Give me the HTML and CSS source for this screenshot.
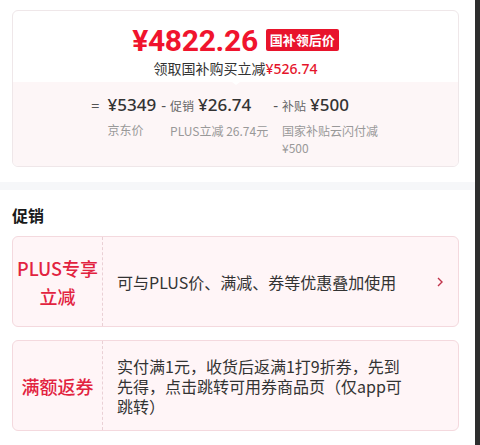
FILE: index.html
```html
<!DOCTYPE html>
<html lang="zh-CN">
<head>
  <meta charset="UTF-8" />
  <meta name="viewport" content="width=device-width, initial-scale=1.0"/>
  <title>促销</title>
  <link rel="stylesheet" href="styles.css">
</head>
<body>
  <div class="page">
    <div class="price-card">
      <div class="price-top">
        <div class="price-main">
          <span class="price-num">¥4822.26</span>
          <span class="price-badge">国补领后价</span>
        </div>
        <div class="price-sub">领取国补购买立减<span class="sub-red">¥526.74</span></div>
      </div>
      <div class="price-detail">
        <div class="calc-col">
          <span class="op op-eq">=</span>
          <div class="calc-body">
            <div class="calc-value">¥5349</div>
            <div class="calc-desc">京东价</div>
          </div>
        </div>
        <div class="calc-col">
          <span class="op">-</span>
          <div class="calc-body">
            <div class="calc-value"><span class="calc-tag">促销</span>¥26.74</div>
            <div class="calc-desc">PLUS立减 26.74元</div>
          </div>
        </div>
        <div class="calc-col">
          <span class="op">-</span>
          <div class="calc-body narrow">
            <div class="calc-value"><span class="calc-tag">补贴</span>¥500</div>
            <div class="calc-desc">国家补贴云闪付减¥500</div>
          </div>
        </div>
      </div>
    </div>

    <div class="divider"></div>

    <div class="promo">
      <h3 class="promo-title">促销</h3>

      <div class="promo-item">
        <div class="promo-label">PLUS专享<br>立减</div>
        <div class="promo-text">可与PLUS价、满减、券等优惠叠加使用</div>
        <span class="promo-arrow">
          <svg width="8" height="12" viewBox="0 0 8 12"><path d="M2 2l4 4-4 4" fill="none" stroke="#c0334a" stroke-width="1.4"/></svg>
        </span>
      </div>

      <div class="promo-item">
        <div class="promo-label">满额返券</div>
        <div class="promo-text">实付满1元，收货后返满1打9折券，先到先得，点击跳转可用券商品页（仅app可跳转）</div>
      </div>
    </div>
  </div>
  <div class="scrollbar"></div>
</body>
</html>
```

FILE: styles.css
```css
html, body {
  height: 100%;
}
body {
  margin: 0;
  display: flex;
  overflow: hidden;
  background: #fff;
  color: #333;
  font-family: "Noto Sans", "Noto Sans CJK SC", sans-serif;
}
.page {
  flex: 1;
}
.scrollbar {
  width: 5px;
  background: #2e2e2e;
}
.price-card {
  margin: 10px 16px 0 12px;
  border: 1px solid #efe7e9;
  border-radius: 6px;
  overflow: hidden;
}
.price-top {
  padding: 11px 0 3px;
  text-align: center;
}
.price-main {
  display: flex;
  justify-content: center;
  align-items: center;
  gap: 8px;
  height: 36px;
}
.price-num {
  font-family: Roboto, "Noto Sans", sans-serif;
  font-size: 30px;
  font-weight: 700;
  color: #f0142d;
  letter-spacing: -0.3px;
}
.price-badge {
  background: #e8142c;
  color: #fff;
  font-family: "Noto Sans CJK SC", sans-serif;
  font-size: 13px;
  font-weight: 700;
  line-height: 22px;
  padding: 0 4px;
  border-radius: 2px;
}
.price-sub {
  font-family: "Noto Sans CJK SC", sans-serif;
  font-size: 14px;
  line-height: 20px;
  color: #333;
}
.sub-red {
  font-family: "Noto Sans", sans-serif;
  font-weight: 500;
  color: #e5142b;
}
.price-detail {
  position: relative;
  background: #fdf6f7;
  padding: 11px 0 10px;
  display: flex;
  justify-content: center;
  gap: 5px;
}
.price-detail::before {
  content: "";
  position: absolute;
  top: 0;
  left: 50%;
  margin-left: -4px;
  border-left: 4px solid transparent;
  border-right: 4px solid transparent;
  border-top: 3px solid #fff;
}
.calc-col {
  display: flex;
  align-items: flex-start;
}
.op {
  font-size: 15px;
  line-height: 24px;
  color: #555;
  margin-right: 4px;
}
.op-eq {
  margin-right: 8px;
}
.calc-value {
  font-size: 17px;
  font-weight: 500;
  line-height: 24px;
  color: #333;
  white-space: nowrap;
}
.calc-tag {
  font-family: "Noto Sans CJK SC", sans-serif;
  font-size: 12px;
  font-weight: 400;
  color: #666;
  margin-right: 4px;
}
.calc-desc {
  margin-top: 4px;
  font-family: "Noto Sans CJK SC", sans-serif;
  font-size: 12px;
  line-height: 17px;
  color: #999;
}
.narrow {
  width: 98px;
}
.divider {
  height: 8px;
  margin-top: 15px;
  background: #f6f7f9;
}
.promo {
  padding: 0 16px 0 12px;
}
.promo-title {
  margin: 14px 0 10px;
  font-family: "Noto Sans CJK SC", sans-serif;
  font-size: 16px;
  font-weight: 700;
  line-height: 22px;
  color: #1a1a1a;
}
.promo-item {
  display: flex;
  align-items: center;
  min-height: 89px;
  margin-bottom: 13px;
  background: #fff5f7;
  border: 1px solid #f4d9de;
  border-radius: 6px;
  font-family: "Noto Sans CJK SC", sans-serif;
}
.promo-label {
  width: 89px;
  align-self: stretch;
  display: flex;
  align-items: center;
  justify-content: center;
  text-align: center;
  border-right: 1px dashed #ead0d5;
  font-size: 18px;
  font-weight: 500;
  line-height: 28px;
  color: #e2233f;
}
.promo-text {
  width: 290px;
  padding-left: 14px;
  font-size: 16px;
  line-height: 20px;
  color: #333;
}
.promo-arrow {
  margin-left: auto;
  margin-right: 14px;
  display: flex;
}
```
